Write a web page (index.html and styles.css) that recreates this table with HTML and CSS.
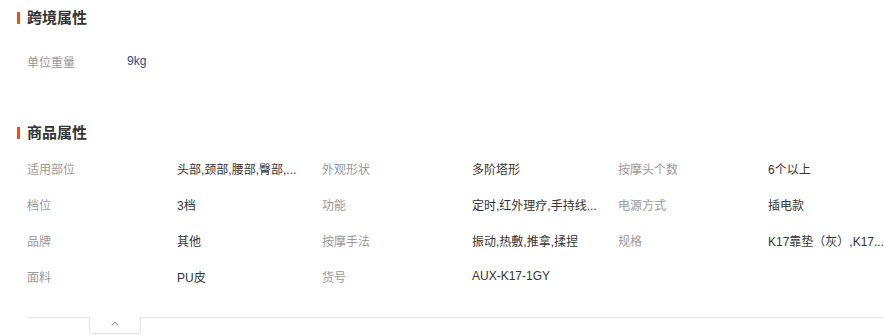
FILE: index.html
```html
<!DOCTYPE html>
<html lang="zh-CN">
<head>
<meta charset="utf-8">
<link rel="stylesheet" href="styles.css">
</head>
<body>
<div class="page">
  <section class="sec sec-cross">
    <h2 class="sec-title">跨境属性</h2>
    <div class="kv-row">
      <span class="kv-label">单位重量</span>
      <span class="kv-value link">9kg</span>
    </div>
  </section>

  <section class="sec sec-goods">
    <h2 class="sec-title">商品属性</h2>
    <div class="attr-grid">
      <span class="a-label">适用部位</span><span class="a-value">头部,颈部,腰部,臀部,...</span>
      <span class="a-label">外观形状</span><span class="a-value">多阶塔形</span>
      <span class="a-label">按摩头个数</span><span class="a-value">6个以上</span>

      <span class="a-label">档位</span><span class="a-value">3档</span>
      <span class="a-label">功能</span><span class="a-value">定时,红外理疗,手持线...</span>
      <span class="a-label">电源方式</span><span class="a-value">插电款</span>

      <span class="a-label">品牌</span><span class="a-value">其他</span>
      <span class="a-label">按摩手法</span><span class="a-value">振动,热敷,推拿,揉捏</span>
      <span class="a-label">规格</span><span class="a-value">K17靠垫（灰）,K17...</span>

      <span class="a-label">面料</span><span class="a-value">PU皮</span>
      <span class="a-label">货号</span><span class="a-value">AUX-K17-1GY</span>
      <span class="a-label"></span><span class="a-value"></span>
    </div>
  </section>

  <div class="fold">
    <div class="fold-line fold-left"></div>
    <div class="fold-tab">
      <svg width="8" height="5" viewBox="0 0 8 5"><path d="M0.8 4.4 L4 1.2 L7.2 4.4" fill="none" stroke="#9a9a9a" stroke-width="1.1"/></svg>
    </div>
    <div class="fold-line fold-right"></div>
  </div>
</div>
</body>
</html>
```

FILE: styles.css
```css
* { box-sizing: border-box; }
html, body { margin: 0; padding: 0; background: #fff; }
body {
  font-family: "Liberation Sans", "Noto Sans CJK SC", sans-serif;
  font-size: 12px;
  color: #333;
}
.page { width: 884px; height: 336px; overflow: hidden; }

.sec { padding-left: 17px; }
.sec-cross { padding-top: 10px; }
.sec-goods { padding-top: 46px; }

.sec-title {
  margin: 0;
  font-size: 15px;
  line-height: 15px;
  font-weight: bold;
  color: #333;
  display: flex;
  align-items: center;
}
.sec-title::before {
  content: "";
  width: 3px;
  height: 12px;
  background: #ff4a00;
  margin-right: 7px;
}

.kv-row {
  display: flex;
  align-items: center;
  height: 36px;
  margin-top: 18px;
  padding-left: 10px;
}
.kv-label { width: 100px; color: #999; }
.kv-value.link { color: #2b4a8a; }

.attr-grid {
  margin-top: 10px;
  padding-left: 10px;
  display: grid;
  grid-template-columns: 150px 145px 150px 146px 150px 1fr;
  grid-auto-rows: 36px;
  align-items: center;
}
.a-label { color: #999; white-space: nowrap; }
.a-value { color: #333; white-space: nowrap; overflow: hidden; }

.fold {
  display: flex;
  align-items: flex-start;
  margin-top: 23px;
  padding-left: 27px;
}
.fold-line { border-top: 1px solid #e6e6e6; height: 1px; }
.fold-left { width: 62px; }
.fold-right { flex: 1; }
.fold-tab {
  width: 52px;
  height: 17px;
  border: 1px solid #e3e3e3;
  border-top: none;
  border-radius: 0 0 4px 4px;
  display: flex;
  justify-content: center;
  padding-top: 4px;
}
.fold-tab svg { display: block; }
```
